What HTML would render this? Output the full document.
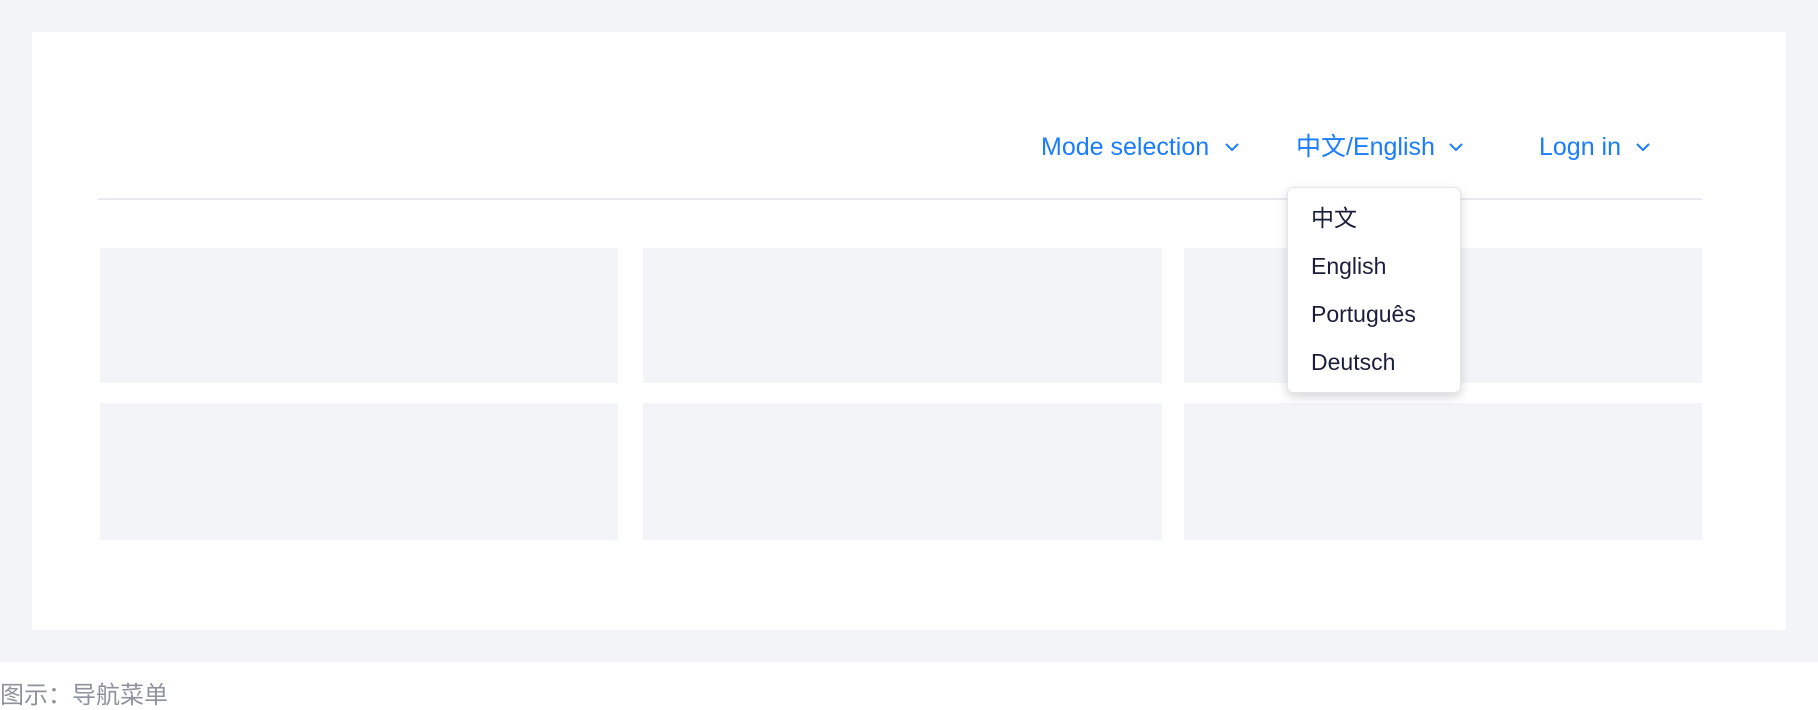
<!DOCTYPE html>
<html><head><meta charset="utf-8"><style>
*{margin:0;padding:0;box-sizing:border-box}
body{width:1818px;height:709px;background:#fff;position:relative;overflow:hidden;font-family:"Liberation Sans","Noto Sans CJK SC",sans-serif}
.bg{position:absolute;left:0;top:0;width:1818px;height:662px;background:#f3f4f8}
.panel{position:absolute;left:32px;top:32px;width:1754px;height:598px;background:#fff}
.line{position:absolute;left:98px;top:198px;width:1604px;height:2px;background:#e8eaef}
.card{position:absolute;background:#f3f4f8}
.nav{position:absolute;top:133px;font-size:25px;line-height:28px;color:#1a7cff;white-space:nowrap}
.chev{position:absolute;top:143px}
.dd{position:absolute;left:1287px;top:187px;width:174px;height:206px;background:#fff;border-radius:6px;border:1px solid #e3e5eb;box-shadow:0 4px 10px rgba(0,0,0,.16)}
.it{position:absolute;left:23px;font-size:23px;color:#1c1d3a;line-height:26px}
.cap{position:absolute;left:0;top:682px;font-size:24px;line-height:28px;color:#8d929c;font-family:"Liberation Sans","Noto Sans CJK SC",sans-serif}
</style></head><body>
<div class="bg"></div>
<div class="panel"></div>
<div class="line"></div>
<div class="card" style="left:100px;top:248px;width:518px;height:135px"></div>
<div class="card" style="left:643px;top:248px;width:519px;height:135px"></div>
<div class="card" style="left:1184px;top:248px;width:518px;height:135px"></div>
<div class="card" style="left:100px;top:403px;width:518px;height:137px"></div>
<div class="card" style="left:643px;top:403px;width:519px;height:137px"></div>
<div class="card" style="left:1184px;top:403px;width:518px;height:137px"></div>

<div class="nav" style="left:1041px">Mode selection</div>
<svg class="chev" style="left:1225px" width="14" height="8" viewBox="0 0 14 8"><path d="M1 1l6 6 6-6" fill="none" stroke="#1a7cff" stroke-width="2"/></svg>
<div class="nav" style="left:1296px">中文/English</div>
<svg class="chev" style="left:1449px" width="14" height="8" viewBox="0 0 14 8"><path d="M1 1l6 6 6-6" fill="none" stroke="#1a7cff" stroke-width="2"/></svg>
<div class="nav" style="left:1539px">Logn in</div>
<svg class="chev" style="left:1636px" width="14" height="8" viewBox="0 0 14 8"><path d="M1 1l6 6 6-6" fill="none" stroke="#1a7cff" stroke-width="2"/></svg>

<div class="dd">
<div class="it" style="top:17px">中文</div>
<div class="it" style="top:65px">English</div>
<div class="it" style="top:113px">Português</div>
<div class="it" style="top:161px">Deutsch</div>
</div>
<div class="cap">图示：导航菜单</div>
</body></html>
